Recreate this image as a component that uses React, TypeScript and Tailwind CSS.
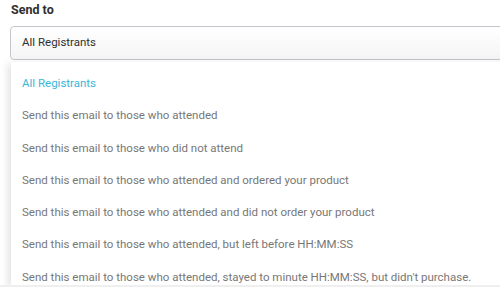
import React from 'react';

const options = [
    'All Registrants',
    'Send this email to those who attended',
    'Send this email to those who did not attend',
    'Send this email to those who attended and ordered your product',
    'Send this email to those who attended and did not order your product',
    'Send this email to those who attended, but left before HH:MM:SS',
    "Send this email to those who attended, stayed to minute HH:MM:SS, but didn't purchase.",
];

const App: React.FC = () => {
    return (
        <div className="w-[500px] h-[287px] overflow-hidden bg-white font-['Roboto',sans-serif]">
            <div className="pl-[11px] pt-[2px] h-[26px] text-[12.5px] font-bold text-[#2f2f2f] leading-[16px]">Send to</div>
            <div className="ml-[10px] w-[510px] h-[34px] border border-[#c3c7cb] rounded-[4px] bg-gradient-to-b from-white to-[#f5f5f5] flex items-center pl-[11px] text-[11.5px] text-[#2f2f2f]">
                All Registrants
            </div>
            {/* Dropdown menu */}
            <div className="ml-[11px] mt-[2px] w-[510px] h-[223px] bg-white shadow-[-3px_2px_8px_rgba(0,0,0,0.12)] overflow-hidden">
                <ul className="pt-[14px] flex flex-col gap-[18.3px]">
                    {options.map((opt, i) => (
                        <li
                            key={opt}
                            className={`pl-[11px] leading-[14px] text-[11.5px] whitespace-nowrap ${i === 0 ? 'text-[#3cb6d6]' : 'text-[#777777]'}`}
                        >
                            {opt}
                        </li>
                    ))}
                </ul>
            </div>
            <div className="h-[10px] bg-[#efefef]" />
        </div>
    );
};

export default App;
